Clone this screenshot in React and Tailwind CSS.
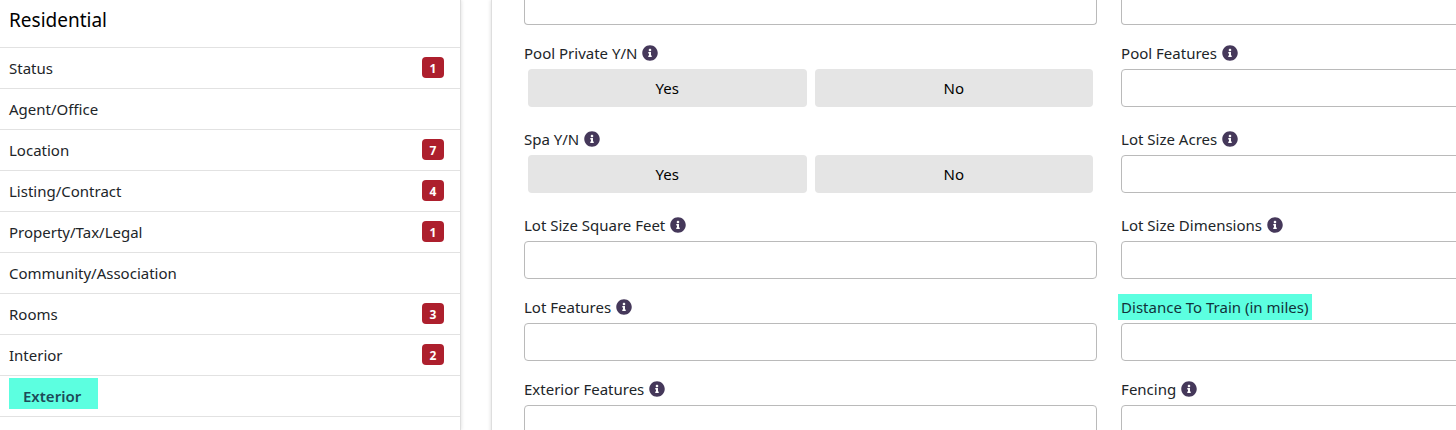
import { FaInfoCircle } from "react-icons/fa";

const sections = [
  { name: "Status", count: 1 },
  { name: "Agent/Office" },
  { name: "Location", count: 7 },
  { name: "Listing/Contract", count: 4 },
  { name: "Property/Tax/Legal", count: 1 },
  { name: "Community/Association" },
  { name: "Rooms", count: 3 },
  { name: "Interior", count: 2 },
  { name: "Exterior", active: true },
];

const fields = [
  { name: "Pool Private Y/N", type: "choice" },
  { name: "Pool Features" },
  { name: "Spa Y/N", type: "choice" },
  { name: "Lot Size Acres" },
  { name: "Lot Size Square Feet" },
  { name: "Lot Size Dimensions" },
  { name: "Lot Features" },
  { name: "Distance To Train (in miles)", highlight: true },
  { name: "Exterior Features" },
  { name: "Fencing" },
];

function SectionLink({ name, count, active }) {
  return (
    <li className="border-b border-[#e2e2e2]">
      {active ? (
        <a href="#" aria-current="page" className="flex px-[9px] pt-0.5 pb-[7px] font-semibold text-[#1d4a58]">
          <span className="bg-[#5cffe0] pt-1.5 pr-[17px] pb-px pl-3.5">{name}</span>
        </a>
      ) : (
        <a href="#" className="flex items-start justify-between py-2 pr-4 pl-[9px]">
          {name}
          {count && (
            <span className="mt-px flex h-[21px] w-[22px] items-center justify-center rounded bg-[#ad1f2d] pt-0.5 text-xs font-bold text-white">
              {count}
            </span>
          )}
        </a>
      )}
    </li>
  );
}

const inputClass = "block h-[38px] w-full rounded border border-[#bababa] bg-white px-3";

function Field({ name, type, highlight }) {
  const id = name.replace(/\W+/g, "-").toLowerCase();
  const choice = type === "choice";
  const info = (
    <button type="button" aria-label={"About " + name} className="text-[#45385a]">
      <FaInfoCircle className="size-4" />
    </button>
  );
  if (choice) {
    return (
      <div role="group" aria-labelledby={id}>
        <div className="mb-1 flex items-center gap-[5px]">
          <span id={id}>{name}</span>
          {info}
        </div>
        <div className="mx-1 mb-1 grid grid-cols-2 gap-2 text-black">
          <button type="button" className="h-[38px] rounded bg-[#e5e5e5]">Yes</button>
          <button type="button" className="h-[38px] rounded bg-[#e5e5e5]">No</button>
        </div>
      </div>
    );
  }
  return (
    <div>
      <div className="mb-1 flex items-center gap-[5px]">
        <label
          htmlFor={id}
          className={highlight ? "-my-px -ml-[3px] bg-[#5cffe0] py-px pr-1 pl-[3px] text-[#12323a]" : ""}
        >
          {name}
        </label>
        {!highlight && info}
      </div>
      <input id={id} type="text" className={inputClass} />
    </div>
  );
}

export default function App() {
  return (
    <div className="flex h-screen overflow-hidden bg-white font-['Segoe_UI','Noto_Sans',sans-serif] text-[15px] leading-6 text-[#212529]">
      <nav className="w-[461px] shrink-0 border-r border-[#dedede] shadow-[0_0_4px_rgba(0,0,0,0.15)]">
        <h1 className="border-b border-[#e2e2e2] pt-2 pb-[15px] pl-[9px] text-[19px] text-black">Residential</h1>
        <ul>
          {sections.map((s) => (
            <SectionLink key={s.name} {...s} />
          ))}
        </ul>
      </nav>
      <main className="ml-[30px] min-w-0 flex-1">
        <form className="grid w-[128%] grid-cols-2 gap-x-6 gap-y-4 border-l border-[#dedede] px-8 shadow-[0_0_4px_rgba(0,0,0,0.15)]">
          <input type="text" aria-label="Pool" className="h-[25px] rounded-b border border-t-0 border-[#bababa] px-3" />
          <input type="text" aria-label="Spa" className="h-[25px] rounded-b border border-t-0 border-[#bababa] px-3" />
          {fields.map((f) => (
            <Field key={f.name} {...f} />
          ))}
        </form>
      </main>
    </div>
  );
}
